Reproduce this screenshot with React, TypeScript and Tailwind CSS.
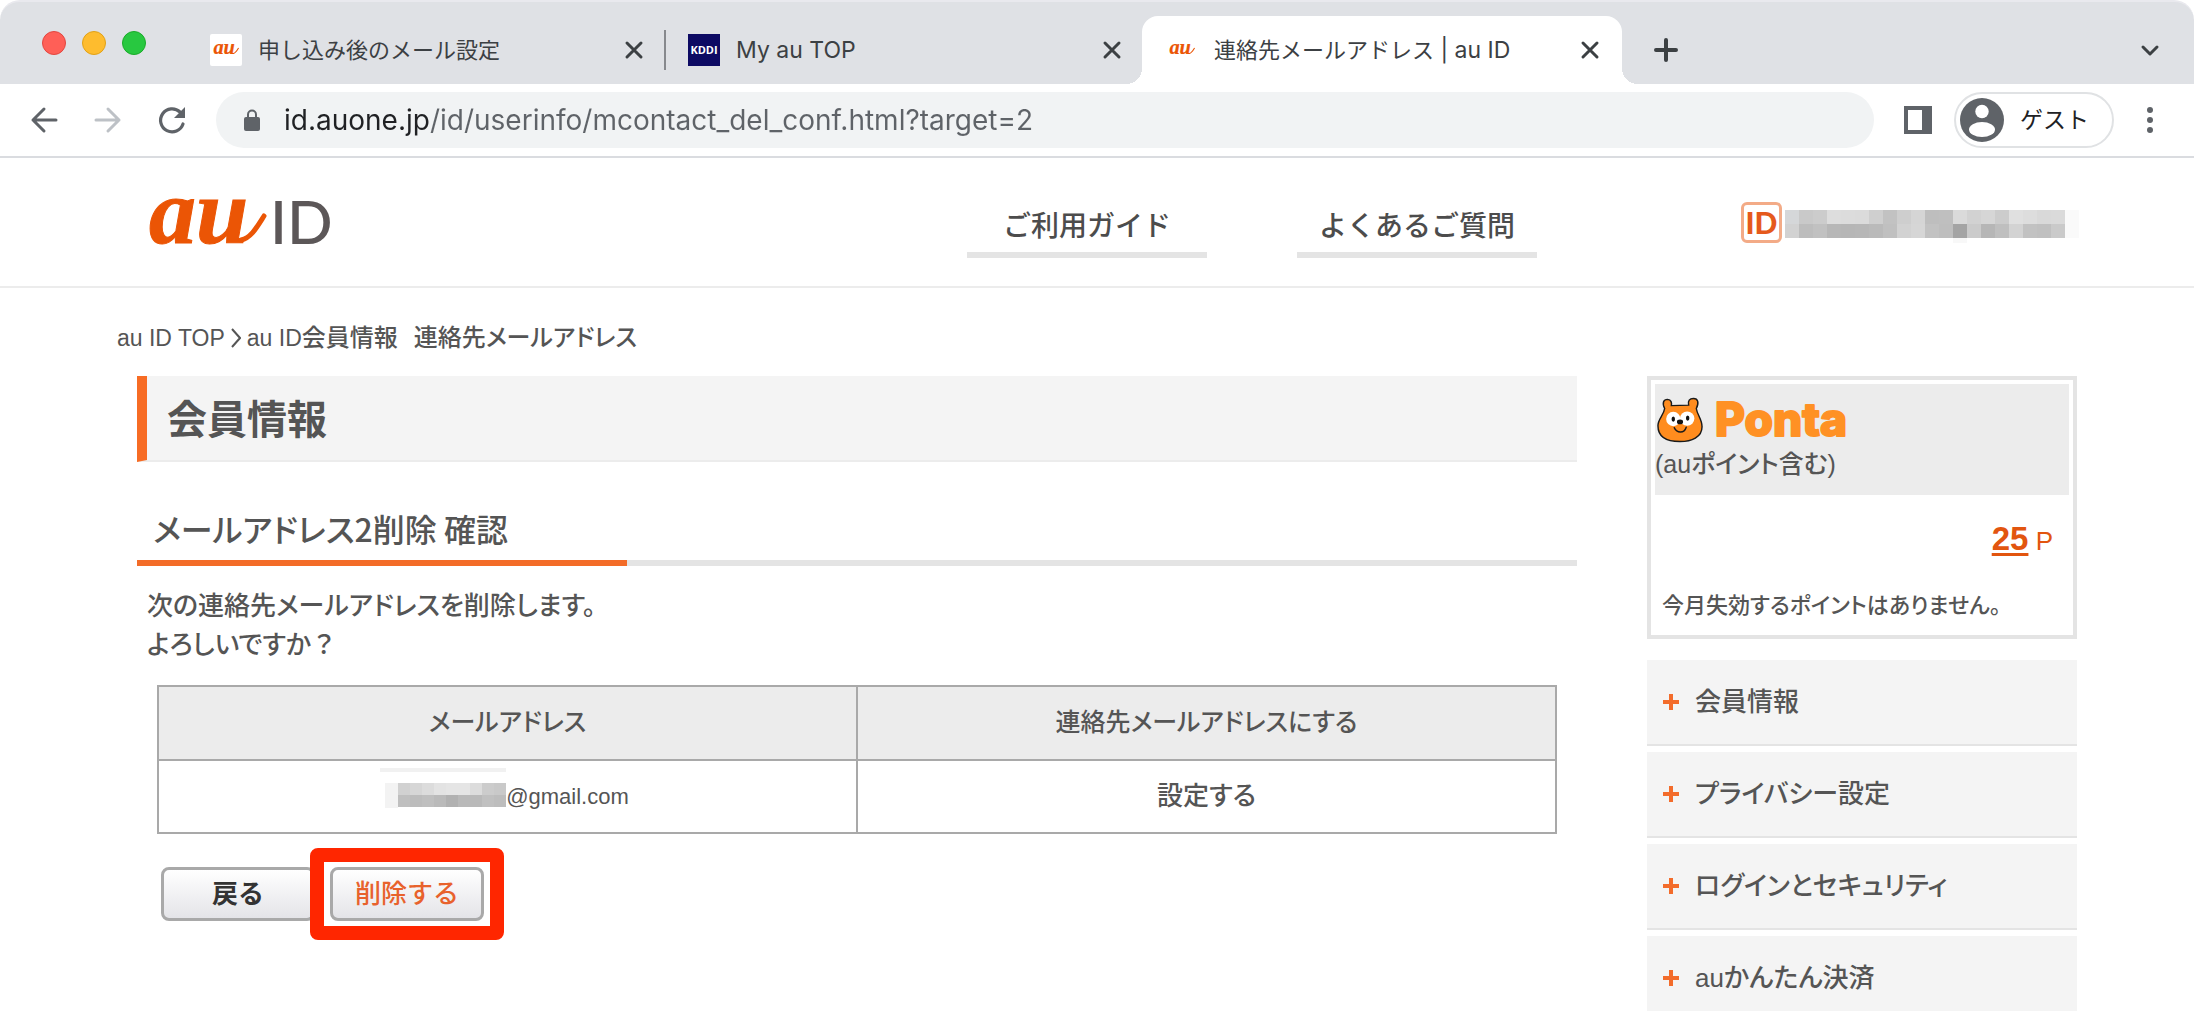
import React from "react";

interface StrokeIconProps {
  d: string;
  className: string;
  strokeWidth?: number;
}

const StrokeIcon = ({ d, className, strokeWidth = 3 }: StrokeIconProps) => (
  <svg
    viewBox="0 0 32 32"
    className={className}
    fill="none"
    stroke="currentColor"
    strokeWidth={strokeWidth}
    strokeLinecap="round"
    strokeLinejoin="round"
    aria-hidden="true"
  >
    <path d={d} />
  </svg>
);

const AuMark = ({ className }: { className: string }) => (
  <svg
    viewBox="0 0 120 80"
    className={className}
    overflow="visible"
    aria-hidden="true"
  >
    <text
      x="2"
      y="61"
      fontSize="94"
      fontWeight="700"
      fontStyle="italic"
      fill="#eb5505"
      stroke="#eb5505"
      strokeWidth="1"
      fontFamily="'Liberation Serif', serif"
    >
      au
    </text>
    <path
      d="M94 58C104 56 110 45 117 34"
      fill="none"
      stroke="#eb5505"
      strokeWidth="5"
      strokeLinecap="round"
    />
  </svg>
);

const KddiMark = () => (
  <span className="flex size-8 shrink-0 items-center justify-center bg-[#0d0a63] font-['Open_Sans',sans-serif] text-[11px] font-bold text-white">
    KDDI
  </span>
);

const tabs = [
  {
    id: "mail",
    title: "申し込み後のメール設定",
    latin: "",
    icon: (
      <span className="flex size-8 shrink-0 items-center justify-center rounded-xs bg-white">
        <AuMark className="w-[26px]" />
      </span>
    ),
    active: false,
  },
  {
    id: "myau",
    title: "",
    latin: "My au TOP",
    icon: <KddiMark />,
    active: false,
  },
  {
    id: "contact",
    title: "連絡先メールアドレス",
    latin: " | au ID",
    icon: (
      <span className="flex size-8 shrink-0 items-center justify-center">
        <AuMark className="w-[26px]" />
      </span>
    ),
    active: true,
  },
];

const TabStrip = () => (
  <div className="flex h-[84px] shrink-0 rounded-t-[20px] border-t-2 border-[#e9e9ee] bg-[#dfe1e5] text-[#3c4043]">
    <div className="mt-[29px] mr-10 ml-[42px] flex gap-4">
      <span className="size-6 rounded-full border border-[#e2463f] bg-[#ff5f57]" />
      <span className="size-6 rounded-full border border-[#e1a116] bg-[#febc2e]" />
      <span className="size-6 rounded-full border border-[#1aab29] bg-[#28c840]" />
    </div>
    <div role="tablist" className="mt-3.5 flex">
      {tabs.map((tab, index) => (
        <div
          key={tab.id}
          role="tab"
          aria-selected={tab.active}
          className={
            tab.active
              ? "relative flex w-[480px] items-center rounded-t-2xl bg-white pr-4 pl-6"
              : "flex w-[478px] items-center pr-3.5"
          }
        >
          {tab.active ? (
            <>
              <span className="absolute bottom-0 -left-4 size-4 bg-[radial-gradient(circle_at_0_0,transparent_16px,#fff_16px)]" />
              <span className="absolute -right-4 bottom-0 size-4 bg-[radial-gradient(circle_at_100%_0,transparent_16px,#fff_16px)]" />
            </>
          ) : (
            <span
              className={
                index === 1
                  ? "mr-[22px] h-10 w-0.5 bg-[#87898d]"
                  : "mr-[22px] h-10 w-0.5"
              }
            />
          )}
          {tab.icon}
          <span className="ml-4 flex-1 text-[22px] whitespace-pre">
            {tab.title}
            <span className="text-[23px]">{tab.latin}</span>
          </span>
          <button
            type="button"
            aria-label="閉じる"
            className="flex size-8 items-center justify-center"
          >
            <StrokeIcon d="M9 9 23 23M23 9 9 23" className="size-8" />
          </button>
        </div>
      ))}
    </div>
    <button
      type="button"
      aria-label="新しいタブ"
      className="mt-[28px] ml-6 flex size-10 items-center justify-center"
    >
      <StrokeIcon
        d="M16 6V26M6 16H26"
        className="size-8"
        strokeWidth={4}
      />
    </button>
    <button
      type="button"
      aria-label="タブを検索"
      className="mt-[28px] mr-6 ml-auto flex size-10 items-center justify-center"
    >
      <StrokeIcon
        d="M9 13 16 20 23 13"
        className="size-8"
        strokeWidth={3}
      />
    </button>
  </div>
);

const Toolbar = () => (
  <div className="flex h-[74px] shrink-0 items-center border-b-2 border-[#dadce0] bg-white px-5 text-[#5f6368]">
    <div className="flex gap-4">
      <button
        type="button"
        aria-label="戻る"
        className="flex size-12 items-center justify-center"
      >
        <StrokeIcon d="M16 5 5 16 16 27M5 16H28" className="size-8" />
      </button>
      <button
        type="button"
        aria-label="進む"
        className="flex size-12 items-center justify-center text-[#bdc1c6]"
      >
        <StrokeIcon d="M16 5 27 16 16 27M27 16H4" className="size-8" />
      </button>
      <button
        type="button"
        aria-label="再読み込み"
        className="flex size-12 items-center justify-center"
      >
        <svg viewBox="0 0 32 32" className="size-8" aria-hidden="true">
          <path
            d="M27 20A11.500 11.500 0 1 1 24 8"
            fill="none"
            stroke="currentColor"
            strokeWidth="3.200"
            strokeLinecap="round"
          />
          <path d="M29 3V14H18Z" fill="currentColor" />
        </svg>
      </button>
    </div>
    <div className="ml-5 flex h-14 flex-1 items-center rounded-full bg-[#f1f3f4] pl-7">
      <svg viewBox="0 0 16 22" className="h-[22px] w-4" aria-hidden="true">
        <rect y="8" width="16" height="14" rx="2" fill="currentColor" />
        <path
          d="M4 9V5.500A4 4 0 0 1 12 5.500V9"
          fill="none"
          stroke="currentColor"
          strokeWidth="2"
        />
      </svg>
      <input
        type="text"
        aria-label="アドレス"
        defaultValue="id.auone.jp/id/userinfo/mcontact_del_conf.html?target=2"
        className="ml-6 h-10 flex-1 bg-[linear-gradient(to_right,#202124_146px,#5f6368_146px)] bg-clip-text text-[28px] text-transparent outline-none"
      />
    </div>
    <button
      type="button"
      aria-label="サイドパネル"
      className="ml-5 flex size-12 items-center justify-center"
    >
      <svg viewBox="0 0 28 28" className="size-7" aria-hidden="true">
        <path
          d="M0 0H28V28H0ZM4 4V24H18V4Z"
          fill="currentColor"
          fillRule="evenodd"
        />
      </svg>
    </button>
    <button
      type="button"
      className="ml-3 flex h-14 items-center rounded-full border-2 border-[#e0e2e4] pr-[23px] pl-1 text-[23px] text-[#202124]"
    >
      <svg viewBox="0 0 44 44" className="size-11" aria-hidden="true">
        <circle cx="22" cy="22" r="22" fill="#5f6368" />
        <circle cx="22" cy="13.500" r="6.700" fill="#fff" />
        <ellipse cx="22" cy="31.500" rx="13" ry="7.500" fill="#fff" />
      </svg>
      <span className="ml-4">ゲスト</span>
    </button>
    <button
      type="button"
      aria-label="メニュー"
      className="ml-3 flex size-12 items-center justify-center"
    >
      <svg viewBox="0 0 6 26" className="h-[26px] w-1.5" aria-hidden="true">
        <circle cx="3" cy="3" r="3" fill="currentColor" />
        <circle cx="3" cy="13" r="3" fill="currentColor" />
        <circle cx="3" cy="23" r="3" fill="currentColor" />
      </svg>
    </button>
  </div>
);

const accountCells = [
  ["#d5d7d9", "#c9c9c9", "#cccccc", "#dddddd", "#dcdcdc", "#dbdbdb", "#cfcfcf", "#c2c2c2", "#cecece", "#d5d5d5", "#bebebe", "#bfbfbf", "#dadada", "#d2d2d2", "#d6d6d6", "#cccccc", "#e0e0e0", "#dddddd", "#d9d9d9", "#dadada"],
  ["#d2d2d2", "#bdbdbd", "#c1c1c1", "#b7b7b7", "#b6b6b6", "#b7b7b7", "#bababa", "#c0c0c0", "#d2d2d2", "#d6d6d6", "#c2c2c2", "#bebebe", "#a4a4a4", "#cbcbcb", "#b6b6b6", "#bfbfbf", "#d3d3d3", "#c2c2c2", "#c0c0c0", "#cacaca"],
];

const mailCells = [
  ["#d1d1d1", "#d6d6d6", "#dcdcdc", "#e3e3e3", "#e5e5e5", "#e5e5e5", "#dcdcdc", "#cccccc", "#c9c9c9"],
  ["#bfbfbf", "#bcbcbc", "#bfbfbf", "#bababa", "#b1b1b1", "#b9b9b9", "#b9b9b9", "#c0c0c0", "#bdbdbd"],
];

const SiteHeader = () => (
  <header className="flex h-[130px] items-center border-b-2 border-[#ececec] pr-[115px] pl-[147px]">
    <a href="#top" aria-label="au ID" className="flex items-center">
      <AuMark className="h-20 w-[120px]" />
      <svg viewBox="0 0 68 80" className="ml-1 h-20 w-[68px]" aria-hidden="true">
        <text
          x="-1"
          y="62"
          fontSize="60"
          fill="#5c5758"
          fontFamily="Lato, sans-serif"
        >
          ID
        </text>
      </svg>
    </a>
    <nav className="ml-auto flex gap-[90px] [font-feature-settings:normal]">
      {["ご利用ガイド", "よくあるご質問"].map((label) => (
        <a
          key={label}
          href="#guide"
          className="flex h-[72px] w-60 items-center justify-center border-b-6 border-[#e4e4e4] pt-4 text-[28px] font-medium text-[#4c4c4c]"
        >
          {label}
        </a>
      ))}
    </nav>
    <div className="ml-[204px] flex items-center">
      <span className="flex size-[41px] items-center justify-center rounded-md border-3 border-[#f3ab87] font-['Lato',sans-serif] text-[30px] font-black text-[#e5591c]">
        ID
      </span>
      <svg
        viewBox="0 0 294 42"
        className="ml-[3px] h-[42px] w-[294px]"
        shapeRendering="crispEdges"
        aria-hidden="true"
      >
        {accountCells.map((row, y) =>
          row.map((fill, x) => (
            <rect
              key={`${x}-${y}`}
              x={x * 14}
              y={9 + y * 14}
              width="14"
              height="14"
              fill={fill}
            />
          ))
        )}
        <rect x="280" y="9" width="14" height="28" fill="#fafafa" />
        <rect x="168" y="37" width="14" height="5" fill="#f8f8f8" />
      </svg>
    </div>
  </header>
);

const Breadcrumb = () => (
  <p className="flex items-center text-[24px] leading-9 font-medium">
    <a href="#top" className="text-[23px]">
      au ID TOP
    </a>
    <svg viewBox="0 0 10 24" className="mx-1.5 h-6 w-2.5" aria-hidden="true">
      <path
        d="M1 3 9 12 1 21"
        fill="none"
        stroke="currentColor"
        strokeWidth="2"
      />
    </svg>
    <a href="#info">
      <span className="text-[23px]">au ID</span>会員情報
    </a>
    <span className="ml-4">連絡先メールアドレス</span>
  </p>
);

const ConfirmTable = () => (
  <table className="mt-5 w-[calc(100%-40px)] table-fixed border-collapse self-center text-[26px]">
    <thead>
      <tr className="h-[74px] bg-[#ececec] text-[25px]">
        <th className="border-2 border-[#a9a9a9] font-medium">
          メールアドレス
        </th>
        <th className="border-2 border-[#a9a9a9] font-medium">
          連絡先メールアドレスにする
        </th>
      </tr>
    </thead>
    <tbody>
      <tr className="h-[73px]">
        <td className="border-2 border-[#a9a9a9] text-[22px]">
          <div className="flex items-center justify-center pr-1.5">
            <svg
              viewBox="0 0 126 58"
              className="h-[58px] w-[126px]"
              shapeRendering="crispEdges"
              aria-hidden="true"
            >
              <rect width="126" height="4" fill="#f1f1f1" />
              <rect x="5" y="15" width="13" height="25" fill="#f3f3f3" />
              {mailCells.map((row, y) =>
                row.map((fill, x) => (
                  <rect
                    key={`${x}-${y}`}
                    x={18 + x * 12}
                    y={15 + y * 12}
                    width="12"
                    height="12"
                    fill={fill}
                  />
                ))
              )}
            </svg>
            @gmail.com
          </div>
        </td>
        <td className="border-2 border-[#a9a9a9] text-center">設定する</td>
      </tr>
    </tbody>
  </table>
);

const FormButtons = () => (
  <div className="mt-[33px] ml-6 flex gap-[15px] text-[26px] [font-feature-settings:normal]">
    <button
      type="button"
      className="h-[54px] w-[154px] rounded-lg border-3 border-[#a9a9a9] bg-linear-to-b from-white to-[#e4e4e8] font-bold text-[#333]"
    >
      戻る
    </button>
    <div className="relative">
      <button
        type="button"
        className="h-[54px] w-[154px] rounded-lg border-3 border-[#a9a9a9] bg-linear-to-b from-white to-[#e4e4e8] font-medium text-[#e8622c]"
      >
        削除する
      </button>
      <span className="pointer-events-none absolute -inset-x-5 -inset-y-[19px] rounded-lg border-14 border-[#ff2600] [box-shadow:inset_0_0_0_4px_#fff]" />
    </div>
  </div>
);

const PontaFace = () => (
  <svg viewBox="0 0 48 48" className="ml-0.5 size-[46px]" aria-hidden="true">
    <path
      d="M8 12C5 6 7 2.500 11 2.500C15 3 15.500 6 15 9L33 8.500C32 4 34 1.500 38 1.500C43 1.500 44 6 41 12C42 19 47 23 47 31C47 42 36 46.500 24 46.500C11 46.500 1 42 1 30C1 23 7 19 8 12Z"
      fill="#ff8c1e"
      stroke="#1a1a1a"
      strokeWidth="1.500"
    />
    <circle cx="17" cy="23" r="7.500" fill="#fff" />
    <circle cx="31.500" cy="22.500" r="7.500" fill="#fff" />
    <ellipse cx="17" cy="23" rx="1.800" ry="2.700" fill="#111" />
    <ellipse cx="32" cy="22" rx="1.800" ry="2.700" fill="#111" />
    <ellipse cx="24" cy="26" rx="3.200" ry="2.500" fill="#111" />
    <path
      d="M18 32Q20 36.500 24.500 36.500T30.500 31.500"
      fill="none"
      stroke="#1a1a1a"
      strokeWidth="1.500"
      strokeLinecap="round"
    />
  </svg>
);

const PointBox = () => (
  <section className="border-4 border-[#e4e4e4] p-1">
    <div className="h-[111px] bg-[#ececec] pt-3">
      <div className="flex h-12 items-center">
        <PontaFace />
        <svg viewBox="0 0 150 60" className="ml-3 h-[60px] w-[150px]" aria-label="Ponta">
          <text
            x="0"
            y="46"
            fontSize="46"
            fontWeight="800"
            fill="#ff9124"
            stroke="#ff9124"
            strokeWidth="2"
            strokeLinejoin="round"
            fontFamily="Inter, sans-serif"
          >
            Ponta
          </text>
        </svg>
      </div>
      <p className="text-[25px] leading-10">(auポイント含む)</p>
    </div>
    <p className="mt-6 pr-4 text-right text-[26px] leading-10 text-[#e2550f]">
      <a
        href="#point"
        className="text-[33px] font-bold underline decoration-3 underline-offset-3"
      >
        25
      </a>{" "}
      P
    </p>
    <p className="mt-[29px] pb-[9px] pl-[7px] text-[22px] leading-8">
      今月失効するポイントはありません。
    </p>
  </section>
);

const menuItems = [
  "会員情報",
  "プライバシー設定",
  "ログインとセキュリティ",
  "auかんたん決済",
];

const SideMenu = () => (
  <ul className="mt-[21px] flex flex-col gap-1.5">
    {menuItems.map((item) => (
      <li key={item}>
        <a
          href="#menu"
          className="flex h-[86px] items-center border-b-2 border-[#e4e4e4] bg-[#f4f4f4] pl-4 text-[26px]"
        >
          <svg viewBox="0 0 16 16" className="size-4" aria-hidden="true">
            <path
              d="M8 0V16M0 8H16"
              stroke="#f36c2b"
              strokeWidth="4"
              fill="none"
            />
          </svg>
          <span className="ml-4">{item}</span>
        </a>
      </li>
    ))}
  </ul>
);

const App = () => {
  return (
    <div className="flex h-screen flex-col overflow-hidden bg-white font-['Inter','Noto_Sans_CJK_JP',sans-serif]">
      <TabStrip />
      <Toolbar />
      <div className="flex-1 overflow-hidden font-['Liberation_Sans','Noto_Sans_CJK_JP',sans-serif] font-medium text-[#555] [font-feature-settings:'palt']">
        <SiteHeader />
        <div className="px-[117px] pt-8">
          <Breadcrumb />
          <div className="mt-5 flex gap-[70px] pl-5">
            <main className="flex min-w-0 flex-1 flex-col">
              <h1 className="flex h-[86px] items-center border-b-2 border-l-10 border-b-[#ececec] border-l-[#f76c24] bg-[#f4f4f4] pt-1 pl-5 text-[40px] font-bold">
                会員情報
              </h1>
              <h2 className="mt-[46px] pb-3 pl-4 font-['Noto_Sans_CJK_JP',sans-serif] text-[32px] leading-10 font-medium">
                メールアドレス2削除 確認
              </h2>
              <div className="h-1.5 bg-[#e4e4e4]">
                <div className="h-full w-[490px] bg-[#f36c28]" />
              </div>
              <p className="mt-[21px] pl-2.5 text-[26px] leading-[39px]">
                次の連絡先メールアドレスを削除します。
                <br />
                よろしいですか
                <span className="[font-feature-settings:normal]">？</span>
              </p>
              <ConfirmTable />
              <FormButtons />
            </main>
            <aside className="w-[430px] shrink-0">
              <PointBox />
              <SideMenu />
            </aside>
          </div>
        </div>
      </div>
    </div>
  );
};

export default App;
